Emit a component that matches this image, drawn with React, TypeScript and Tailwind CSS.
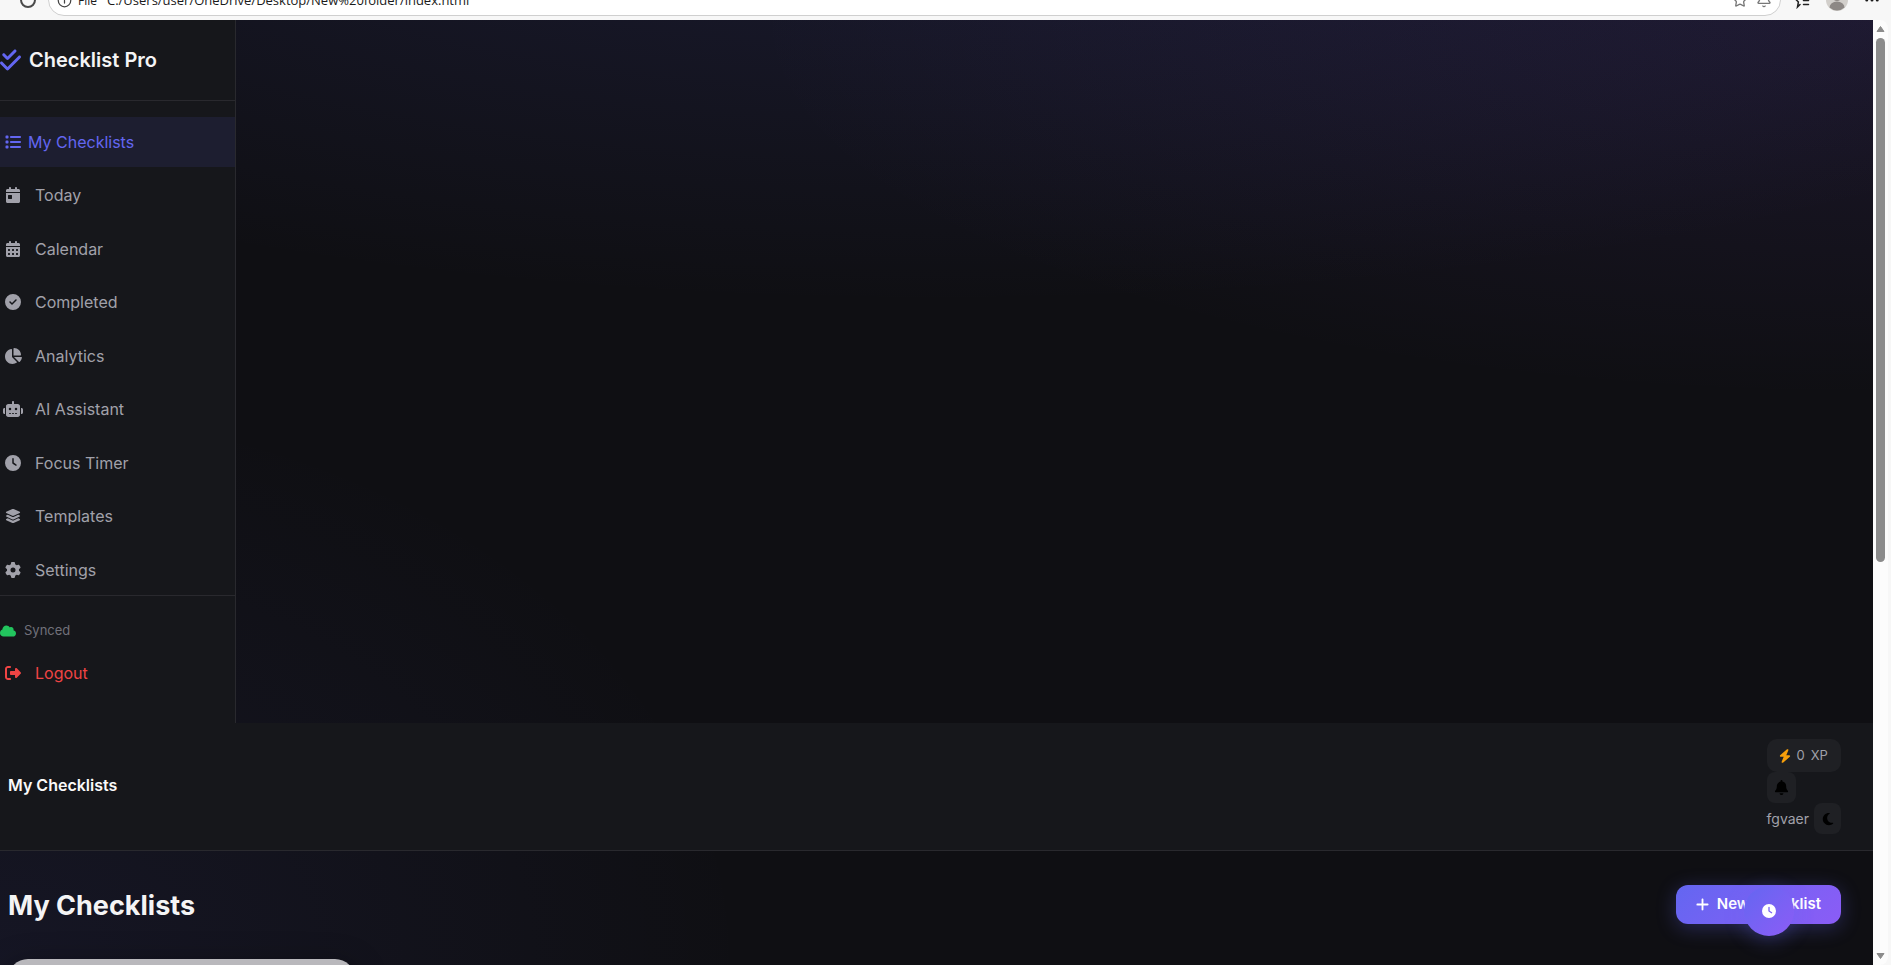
import React, { useState } from 'react';
import {
  FaBell,
  FaBolt,
  FaCalendarDay,
  FaCalendarDays,
  FaChartPie,
  FaCheckDouble,
  FaCircleCheck,
  FaClock,
  FaCloud,
  FaGear,
  FaLayerGroup,
  FaList,
  FaMoon,
  FaPlus,
  FaRightFromBracket,
  FaRobot,
} from 'react-icons/fa6';
import { Bell, Info, MoreHorizontal, Star } from 'lucide-react';

const NAV_ITEMS = [
  { id: 'checklists', label: 'My Checklists', icon: <FaList size={16} /> },
  { id: 'today', label: 'Today', icon: <FaCalendarDay size={16} /> },
  { id: 'calendar', label: 'Calendar', icon: <FaCalendarDays size={16} /> },
  { id: 'completed', label: 'Completed', icon: <FaCircleCheck size={16} /> },
  { id: 'analytics', label: 'Analytics', icon: <FaChartPie size={18} /> },
  { id: 'assistant', label: 'AI Assistant', icon: <FaRobot size={20} /> },
  { id: 'focus', label: 'Focus Timer', icon: <FaClock size={16} /> },
  { id: 'templates', label: 'Templates', icon: <FaLayerGroup size={16} /> },
  { id: 'settings', label: 'Settings', icon: <FaGear size={16} /> },
];

const BrowserBar: React.FC = () => (
  <div className="flex h-5 items-end gap-3 overflow-hidden bg-[#f7f7f7] pb-1 pr-[10px] font-['Open_Sans',sans-serif] text-[#1b1b1b]">
    <div className="ml-5 flex h-8 w-4 shrink-0 items-center justify-center">
      <span className="h-4 w-4 rounded-full border-2 border-[#4a4a4a]" />
    </div>
    <div className="flex h-8 flex-1 items-center rounded-full border border-[#cfcfcf] bg-white pl-2 pr-2">
      <Info size={15} strokeWidth={2} className="text-[#444]" />
      <span className="ml-[6px] w-[29px] pt-[2px] text-xs">File</span>
      <span className="flex-1 pt-[2px] text-[13px]">C:/Users/user/OneDrive/Desktop/New%20folder/index.html</span>
      <Star size={16} strokeWidth={2} className="mr-2 text-[#777]" />
      <Bell size={16} strokeWidth={2} className="text-[#777]" />
    </div>
    <div className="flex h-8 items-center gap-[15px]">
      <svg width="18" height="18" viewBox="0 0 18 18" fill="none" stroke="#222" strokeWidth="1.5" strokeLinecap="round">
        <path d="M7 13.5 4.500 16l.9-5L1.500 7l5.200-.8L9 1.500l2.200 4.700M10.500 9.500h5M10.500 13.500h5" />
      </svg>
      <svg width="22" height="22" viewBox="0 0 22 22">
        <circle cx="11" cy="11" r="11" fill="#d2cfcb" />
        <circle cx="11" cy="8" r="4" fill="#8d8885" />
        <path d="M3.500 18.500a7.500 6 0 0 1 15 0 11 11 0 0 1-15 0z" fill="#8d8885" />
      </svg>
      <MoreHorizontal size={18} strokeWidth={2} />
    </div>
  </div>
);

const ScrollRail: React.FC = () => (
  <div className="mr-[3px] flex w-[15px] shrink-0 flex-col items-center rounded-r-lg bg-[#fcfcfc] py-1">
    <svg width="9" height="10" viewBox="0 0 9 10" className="shrink-0">
      <path d="M4.500 2.500 8 7.500H1z" fill="#8b8b8b" stroke="#8b8b8b" strokeLinejoin="round" />
    </svg>
    <div className="mt-1 w-[9px] flex-[526] rounded-full bg-[#8b8b8b]" />
    <div className="flex-[390]" />
    <svg width="9" height="10" viewBox="0 0 9 10" className="shrink-0">
      <path d="M4.500 7.500 8 2.500H1z" fill="#8b8b8b" stroke="#8b8b8b" strokeLinejoin="round" />
    </svg>
  </div>
);

const Sidebar: React.FC = () => {
  const [active, setActive] = useState('checklists');

  return (
    <aside className="w-[236px] border-r border-[#29292e] bg-[#16171b]">
      <div className="flex h-[81px] items-center gap-2 border-b border-[#29292e]">
        <FaCheckDouble className="h-6 w-[21px] text-[#6366f1]" />
        <span className="text-xl font-semibold text-[#f4f4f5]">Checklist Pro</span>
      </div>

      <nav className="flex h-[494px] flex-col justify-between pt-4">
        {NAV_ITEMS.map((item) => (
          <button
            key={item.id}
            type="button"
            onClick={() => setActive(item.id)}
            className={`flex h-[50px] w-full items-center pb-px text-left text-base ${
              active === item.id
                ? 'gap-[2px] bg-[#1d1e30] text-[#6366f1]'
                : 'gap-[9px] text-[#a1a1aa] hover:bg-[#1f2024]'
            }`}
          >
            <span className="flex w-[26px] shrink-0 justify-center">{item.icon}</span>
            {item.label}
          </button>
        ))}
      </nav>

      <div className="border-t border-[#29292e] pb-6 pt-[25px]">
        <div className="flex h-5 items-center gap-2 text-[13px] text-[#71717a]">
          <FaCloud size={16} className="text-[#22c55e]" />
          Synced
        </div>
        <button type="button" className="mt-2 flex h-[50px] w-full items-center gap-[9px] pb-[2px] text-base text-[#ef4444]">
          <span className="flex w-[26px] shrink-0 justify-center">
            <FaRightFromBracket size={16} />
          </span>
          Logout
        </button>
      </div>
    </aside>
  );
};

const TopBar: React.FC = () => (
  <header className="flex items-center justify-between border-b border-[#29292e] bg-[#16171b] py-4 pl-2 pr-8">
    <div className="pb-1 text-base font-semibold text-[#fafafa]">My Checklists</div>
    <div className="flex flex-col items-start">
      <div className="flex h-[33px] items-center self-stretch rounded-[10px] bg-[#1f2024] px-3 text-[13px] text-[#a1a1aa]">
        <FaBolt className="mr-[6px] h-[14px] w-3 text-[#f59e0b]" />
        <span className="mr-[6px]">0</span>
        <span>XP</span>
      </div>
      <button type="button" aria-label="Notifications" className="flex h-[31px] w-[29px] items-center justify-center rounded-lg bg-[#1f2024] text-black">
        <FaBell size={15} />
      </button>
      <div className="flex items-center gap-[5px] text-sm text-[#a1a1aa]">
        fgvaer
        <button type="button" aria-label="Toggle theme" className="flex h-[31px] w-[27px] items-center justify-center rounded-lg bg-[#1f2024] text-black">
          <FaMoon size={14} />
        </button>
      </div>
    </div>
  </header>
);

const App: React.FC = () => (
  <div className="flex h-screen flex-col overflow-hidden bg-[#f7f7f7] font-['Inter',sans-serif]">
    <BrowserBar />
    <div className="flex min-h-0 flex-1">
      <div className="relative min-w-0 flex-1 overflow-hidden bg-[#0f0f13] bg-[radial-gradient(ellipse_80%_50%_at_50%_-20%,rgba(99,102,241,0.15),transparent),radial-gradient(ellipse_60%_40%_at_100%_0%,rgba(139,92,246,0.1),transparent),radial-gradient(ellipse_40%_60%_at_0%_100%,rgba(99,102,241,0.08),transparent)]">
        <Sidebar />
        <TopBar />
        <main className="pl-2 pr-8 pt-[34px]">
          <div className="flex items-center justify-between">
            <h1 className="pt-[2px] text-[27px] font-bold leading-[37px] text-[#f4f4f5]">My Checklists</h1>
            <button
              type="button"
              className="flex h-[39px] items-center gap-2 rounded-xl bg-linear-135 from-[#6366f1] to-[#8b5cf6] px-5 text-[15px] font-semibold text-white shadow-[0_4px_20px_rgba(99,102,241,0.3)]"
            >
              <FaPlus className="h-[15px] w-[13px]" />
              New Checklist
            </button>
          </div>
          <div className="mt-[35px] h-40 w-[347px] rounded-[20px] bg-[#b9b8bc] shadow-[0_8px_32px_rgba(0,0,0,0.4)]" />
        </main>

        {/* Floating focus timer */}
        <button
          type="button"
          aria-label="Focus timer"
          className="absolute bottom-[29px] right-[79px] flex h-[50px] w-[50px] items-center justify-center rounded-full bg-linear-135 from-[#6366f1] to-[#8b5cf6] text-white shadow-[0_4px_20px_rgba(99,102,241,0.3)]"
        >
          <FaClock size={14} />
        </button>
      </div>
      <ScrollRail />
    </div>
  </div>
);

export default App;
